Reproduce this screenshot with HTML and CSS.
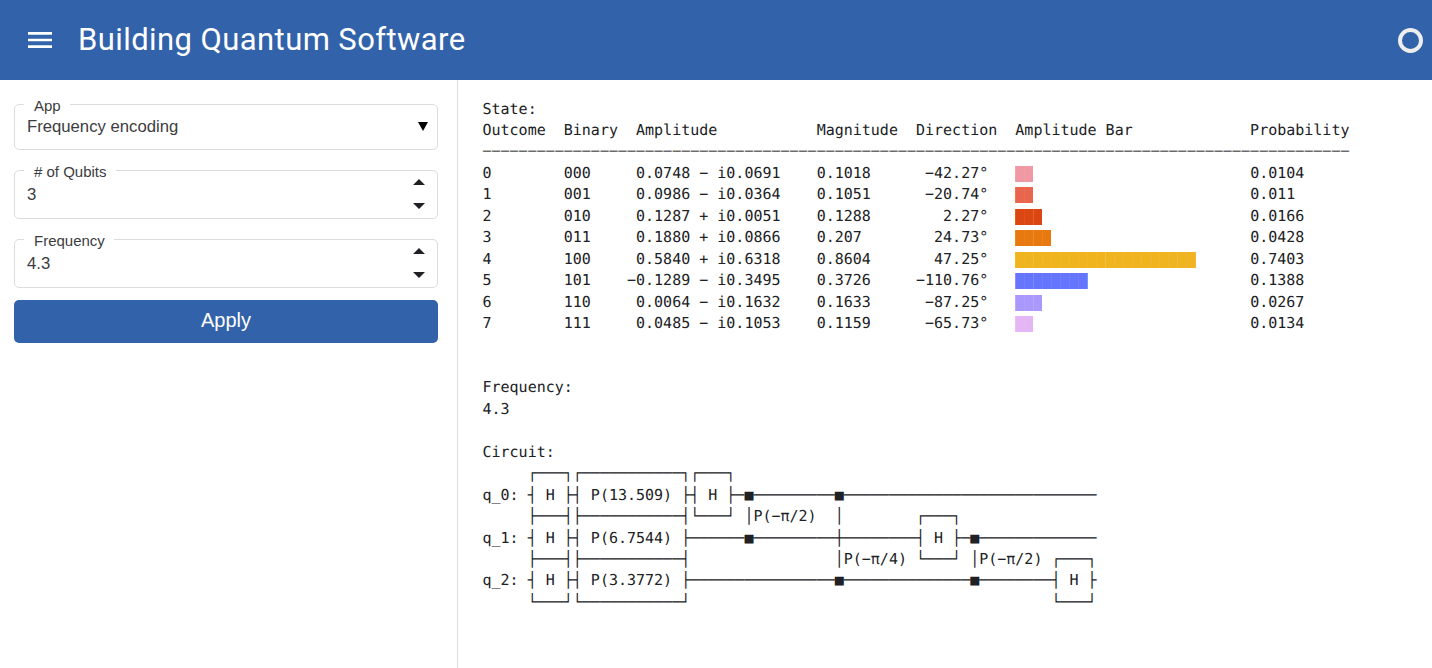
FILE: index.html
```html
<!DOCTYPE html>
<html lang="en">
<head>
<meta charset="utf-8">
<title>Building Quantum Software</title>
<link rel="stylesheet" href="styles.css">
</head>
<body>
<header class="topbar">
  <svg class="menu-icon" viewBox="0 0 32 32" width="32" height="32"><path d="M4 24h24v-2.67H4V24zm0-6.67h24v-2.66H4v2.66zM4 8v2.67h24V8H4z" fill="#fff"/></svg>
  <h1 class="title">Building Quantum Software</h1>
  <span class="status"></span>
</header>
<main class="layout">
  <aside class="sidebar">
    <fieldset class="field field-select">
      <legend>App</legend>
      <div class="value"><span>Frequency encoding</span><svg class="caret" width="10" height="9" viewBox="0 0 10 9"><path d="M0 0h10L5 9z" fill="#000"/></svg></div>
    </fieldset>
    <fieldset class="field field-number">
      <legend>#&nbsp;of Qubits</legend>
      <div class="value"><span>3</span><svg class="spin" width="12" height="30" viewBox="0 0 12 30"><path d="M0 6L6 0l6 6zM0 24h12l-6 6z" fill="#202124"/></svg></div>
    </fieldset>
    <fieldset class="field field-number">
      <legend>Frequency</legend>
      <div class="value"><span>4.3</span><svg class="spin" width="12" height="30" viewBox="0 0 12 30"><path d="M0 6L6 0l6 6zM0 24h12l-6 6z" fill="#202124"/></svg></div>
    </fieldset>
    <button class="apply">Apply</button>
  </aside>
  <section class="output">
<pre>State:
Outcome  Binary  Amplitude           Magnitude  Direction  Amplitude Bar             Probability
<span class="rule">−−−−−−−−−−−−−−−−−−−−−−−−−−−−−−−−−−−−−−−−−−−−−−−−−−−−−−−−−−−−−−−−−−−−−−−−−−−−−−−−−−−−−−−−−−−−−−−−</span>
0        000     0.0748 − i0.0691    0.1018      −42.27°   <span class="bar b0">██</span>                        0.0104
1        001     0.0986 − i0.0364    0.1051      −20.74°   <span class="bar b1">██</span>                        0.011
2        010     0.1287 + i0.0051    0.1288        2.27°   <span class="bar b2">███</span>                       0.0166
3        011     0.1880 + i0.0866    0.207        24.73°   <span class="bar b3">████</span>                      0.0428
4        100     0.5840 + i0.6318    0.8604       47.25°   <span class="bar b4">████████████████████</span>      0.7403
5        101    −0.1289 − i0.3495    0.3726     −110.76°   <span class="bar b5">████████</span>                  0.1388
6        110     0.0064 − i0.1632    0.1633      −87.25°   <span class="bar b6">███</span>                       0.0267
7        111     0.0485 − i0.1053    0.1159      −65.73°   <span class="bar b7">██</span>                        0.0134


Frequency:
4.3

Circuit:
     ┌───┐┌───────────┐┌───┐
q_0: ┤ H ├┤ P(13.509) ├┤ H ├─■─────────■────────────────────────────
     ├───┤├───────────┤└───┘ │P(−π/2)  │        ┌───┐
q_1: ┤ H ├┤ P(6.7544) ├──────■─────────┼────────┤ H ├─■─────────────
     ├───┤├───────────┤                │P(−π/4) └───┘ │P(−π/2) ┌───┐
q_2: ┤ H ├┤ P(3.3772) ├────────────────■──────────────■────────┤ H ├
     └───┘└───────────┘                                        └───┘
</pre>
  </section>
</main>
</body>
</html>
```
FILE: styles.css
```css
* { box-sizing: border-box; }
body { margin: 0; height: 668px; overflow: hidden; background: #fff; color: #202124; font-family: "Liberation Sans", Arial, sans-serif; }
.topbar { height: 80px; display: flex; align-items: center; padding: 0 9px 0 24px; background: #3262a9; color: #fff; }
.title { margin: 0 0 0 22px; font: 400 31px/40px Roboto, sans-serif; letter-spacing: 0.42px; white-space: nowrap; }
.status { margin: 1px 0 0 auto; width: 25px; height: 25px; border: 4px solid #eee; border-radius: 50%; }
.layout { display: flex; height: 588px; }
.sidebar { width: 458px; flex: none; border-right: 1px solid #ddd; padding: 16px 19px 0 14px; }
.field { display: block; min-width: 0; margin: 0; padding: 0 12px; border: 1px solid #dcdcdc; border-radius: 5px; }
.field legend { margin-left: -3px; padding: 2px 9px 0 10px; font-size: 15px; line-height: 15px; color: #3c3c3f; }
.value { display: flex; justify-content: space-between; font-size: 16.7px; line-height: 20px; color: #3c3c3f; }
.field-select { height: 54px; }
.field-select .value { padding-top: 4px; }
.field-number { height: 57px; margin-top: 12px; }
.field-number .value span { padding-top: 6px; }
.caret { margin: 5px -3px 0 0; }
.apply { display: block; width: 100%; height: 43px; margin-top: 12px; padding: 0 0 2px; border: 0; border-radius: 5px; background: #3262a9; color: #fff; font: 20px "Liberation Sans", Arial, sans-serif; }
.output { padding: 18.5px 0 0 24.5px; }
.output pre { margin: 0; font: 15px/21.45px "DejaVu Sans Mono", monospace; text-rendering: geometricPrecision; }
.rule { color: #666; -webkit-text-stroke: 0.4px #777; }
.bar { display: inline-block; height: 16px; line-height: 16px; vertical-align: -4px; overflow: hidden; }
.b0 { color: #f099a5; }
.b1 { color: #e9654d; }
.b2 { color: #dc4613; }
.b3 { color: #e77910; }
.b4 { color: #f0b41f; }
.b5 { color: #6675fd; }
.b6 { color: #aa98fc; }
.b7 { color: #e4b6f3; }
```
